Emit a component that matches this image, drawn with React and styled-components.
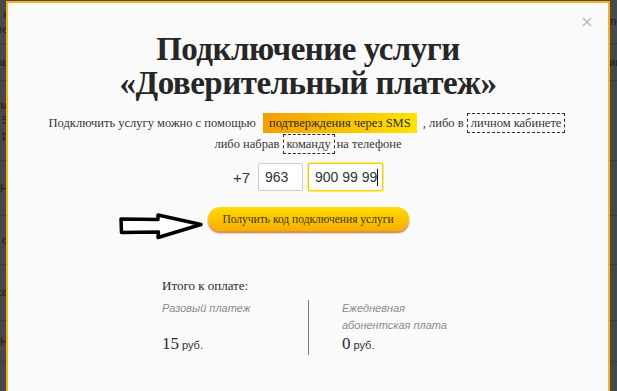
import React from 'react';
import styled, { createGlobalStyle } from 'styled-components';

const Global = createGlobalStyle`
  html, body { margin: 0; padding: 0; background: #474747; }
  #root { width: 617px; height: 391px; position: relative; overflow: hidden; }
`;

// backdrop page (dimmed)
const Backdrop = styled.div`
  display: flex;
  flex-direction: column;
  height: 391px;
  background: #474747;
  font: 11px "Liberation Sans", Arial, sans-serif;
  color: #1d1d1d;
`;

const BgRow = styled.div`
  height: ${p => p.$h}px;
  flex: none;
  display: flex;
  justify-content: space-between;
  align-items: ${p => p.$align || 'center'};
  border-bottom: 1px solid #3b3b3b;
  background: ${p => p.$bg || 'transparent'};
`;

const Edge = styled.div`
  width: 8px;
  overflow: hidden;
  display: flex;
  flex-direction: column;
  justify-content: center;
  align-items: ${p => (p.$right ? 'flex-start' : 'flex-end')};
  white-space: nowrap;
  line-height: 15px;
`;

const BottomText = styled.div`
  padding: 0 0 0 133px;
  display: flex;
  align-items: center;
  gap: 3px;
  margin-top: 3px;
  font-size: 11px;
  color: #1a1a1a;
  i { display: inline-block; width: 11px; height: 11px; background: #111; }
`;

// modal
const Modal = styled.div`
  position: absolute;
  left: 6px;
  top: 1px;
  width: 600px;
  height: 382px;
  border: 2px solid #f8b01c;
  background: #fafafa;
  display: flex;
  flex-direction: column;
  align-items: center;
  padding-top: 29px;
  box-sizing: content-box;
  font-family: "Liberation Serif", "Times New Roman", serif;
  color: #333;
`;

const Close = styled.svg`
  position: absolute;
  top: 14px;
  right: 16px;
  width: 10px;
  height: 10px;
`;

const Title = styled.h1`
  margin: 0;
  font-family: "Liberation Serif", "Times New Roman", serif;
  font-weight: bold;
  font-size: 33px;
  line-height: 34px;
  letter-spacing: -0.5px;
  text-align: center;
  color: #262626;
`;

const Lead = styled.p`
  margin: 13px 0 0;
  font-size: 12.5px;
  line-height: 21px;
  text-align: center;
  color: #363636;
`;

const Highlight = styled.span`
  padding: 3px 6px;
  margin: 0 3px 0 4px;
  background: linear-gradient(to right, #f39e00, #ffe300);
  color: #2e2e2e;
`;

const Dashed = styled.span`
  padding: 2px 3px;
  border: 1px dashed #2a2a2a;
  margin-right: 2px;
`;

const PhoneRow = styled.div`
  margin-top: 8px;
  display: flex;
  align-items: center;
  font-family: "Liberation Sans", Arial, sans-serif;
  font-size: 14px;
  color: #333;
`;

const Prefix = styled.span`
  margin-right: 8px;
  font-size: 15px;
`;

const Field = styled.div`
  box-sizing: border-box;
  width: ${p => p.$w}px;
  height: 28px;
  margin-left: ${p => p.$gap || 0}px;
  padding-left: 6px;
  display: flex;
  align-items: center;
  background: #fff;
  border: 1px solid ${p => (p.$active ? '#f3d000' : '#cdcdcd')};
  box-shadow: ${p => (p.$active ? '0 0 0 0.5px #f8d800' : 'none')};
  border-radius: 2px;
`;

const Caret = styled.span`
  display: inline-block;
  width: 1px;
  height: 17px;
  background: #111;
`;

const Action = styled.div`
  position: relative;
  margin-top: 16px;
`;

const Arrow = styled.svg`
  position: absolute;
  right: calc(100% + 3px);
  top: 6px;
  width: 86px;
  height: 28px;
  overflow: visible;
`;

const GetCode = styled.button`
  width: 201px;
  height: 24px;
  border: none;
  border-radius: 12px;
  background: linear-gradient(#ffdc00, #f8ad00);
  box-shadow: 0 2px 0 #d8934c, 0 2px 1px 1px rgba(200, 140, 70, 0.35);
  font-family: "Liberation Serif", "Times New Roman", serif;
  font-size: 11.5px;
  color: #3b3a1c;
  padding: 0;
  cursor: pointer;
`;

const Summary = styled.div`
  align-self: flex-start;
  margin: 46px 0 0 154px;
`;

const Total = styled.div`
  font-size: 13px;
  line-height: 17px;
  color: #2a2a2a;
`;

const Columns = styled.div`
  margin-top: 6px;
  display: flex;
`;

const Col = styled.div`
  width: ${p => p.$w}px;
  padding-left: ${p => p.$pad || 0}px;
  border-right: ${p => (p.$line ? '1px solid #7a7a7a' : 'none')};
`;

const Label = styled.div`
  height: 34px;
  font-family: "Liberation Sans", Arial, sans-serif;
  font-style: italic;
  font-size: 11px;
  line-height: 17px;
  color: #8a8a8a;
`;

const Value = styled.div`
  height: 21px;
  line-height: 20px;
  font-size: 17px;
  color: #2a2a2a;
  span {
    margin-left: 3px;
    font-family: "Liberation Sans", Arial, sans-serif;
    font-size: 11px;
    color: #333;
  }
`;

const bgRows = [
  { h: 43, left: ['к', 'ме'], right: ['тн'], bg: '#4a4a4a' },
  { h: 36, left: ['ов'], right: ['ии'] },
  { h: 79, left: ['м', '5', 'р'], right: [] },
  { h: 54, left: ['Н'], right: [] },
  { h: 48, left: ['о'], right: [] },
  { h: 55, left: [':а'], right: [] },
  { h: 40, left: ['Н'], right: [] },
];

export default function App() {
  return (
    <>
      <Global />
      <Backdrop>
        {bgRows.map((r, i) => (
          <BgRow key={i} $h={r.h} $bg={r.bg}>
            <Edge>{r.left.map(t => <span key={t}>{t}</span>)}</Edge>
            <Edge $right>{r.right.map(t => <span key={t}>{t}</span>)}</Edge>
          </BgRow>
        ))}
        <BottomText>телефоне *141*7# <i /></BottomText>
      </Backdrop>

      <Modal>
        <Close viewBox="0 0 10 10">
          <path d="M1 1 L9 9 M9 1 L1 9" stroke="#bdbdbd" strokeWidth="1.6" />
        </Close>

        <Title>
          Подключение услуги
          <br />
          «Доверительный платеж»
        </Title>

        <Lead>
          Подключить услугу можно с помощью <Highlight>подтверждения через SMS</Highlight> , либо в{' '}
          <Dashed>личном кабинете</Dashed>
          <br />
          либо набрав <Dashed>команду</Dashed>на телефоне
        </Lead>

        <PhoneRow>
          <Prefix>+7</Prefix>
          <Field $w={45}>963</Field>
          <Field $w={75} $gap={5} $active>
            900 99 99<Caret />
          </Field>
        </PhoneRow>

        <Action>
          <Arrow viewBox="0 0 86 28">
            <path
              d="M2 6 L39 6.5 L39 2 L82 11.5 L39 24.5 L39.5 19 L2.5 19.5 Z"
              fill="#fff"
              stroke="#000"
              strokeWidth="3.5"
              strokeLinejoin="round"
            />
          </Arrow>
          <GetCode>Получить код подключения услуги</GetCode>
        </Action>

        <Summary>
          <Total>Итого к оплате:</Total>
          <Columns>
            <Col $w={146} $line>
              <Label>Разовый платеж</Label>
              <Value>15<span>руб.</span></Value>
            </Col>
            <Col $w={120} $pad={33}>
              <Label>Ежедневная<br />абонентская плата</Label>
              <Value>0<span>руб.</span></Value>
            </Col>
          </Columns>
        </Summary>
      </Modal>
    </>
  );
}
